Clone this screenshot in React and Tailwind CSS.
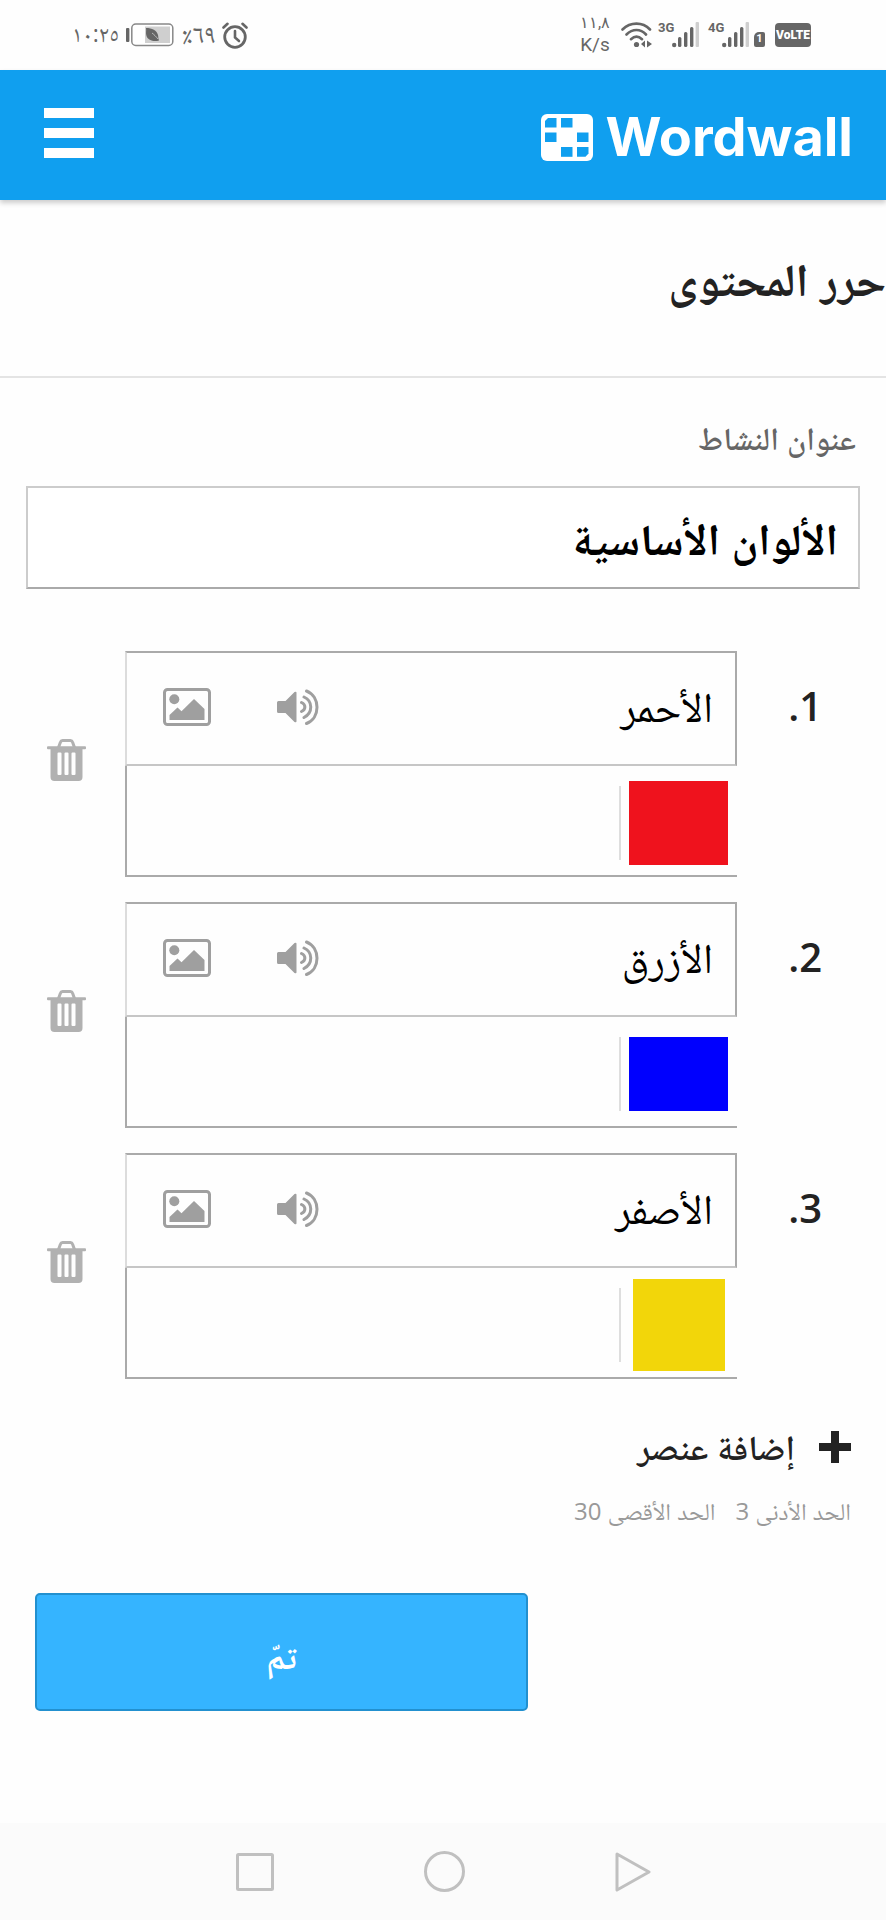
import React from "react";

const items = [
  { n: 1, text: "الأحمر", swatch: "h-[84px] w-[99px] bg-[#ef121d]" },
  { n: 2, text: "الأزرق", swatch: "h-[74px] w-[99px] bg-[#0000fe]" },
  { n: 3, text: "الأصفر", swatch: "h-[92px] w-[92px] bg-[#f2d60a]" },
];

function Bars() {
  return (
    <svg width="28" height="26" viewBox="0 0 28 26" aria-hidden="true">
      <circle cx="2.2" cy="23" r="2.2" fill="#666" />
      <rect x="6" y="15" width="3.4" height="10" rx="1.5" fill="#666" />
      <rect x="12" y="10" width="3.4" height="15" rx="1.5" fill="#666" />
      <rect x="18" y="5" width="3.4" height="20" rx="1.5" fill="#666" />
      <rect x="23.6" y="0" width="3.4" height="25" rx="1" fill="#cfcfcf" />
    </svg>
  );
}

function StatusBar() {
  return (
    <div dir="ltr" className="flex h-[70px] items-center justify-between pr-[75px] pl-[72px] text-[#666]">
      <div className="flex items-center">
        <span className="w-[46px] pb-1 text-[23px] leading-7">١٠:٢٥</span>
        <svg className="ml-2" width="48" height="24" viewBox="0 0 48 24" aria-label="البطارية">
          <rect x="0" y="5" width="3.4" height="14" rx="1" fill="#666" />
          <rect x="5.8" y="1" width="41" height="21.5" rx="4" fill="#fff" stroke="#888" strokeWidth="1.5" />
          <rect x="19" y="3.5" width="25" height="16.5" fill="#cfcfcf" />
          <path d="M20 5c6 0 11 2.500 12 7 .5 2 0 3 1 5.500-5 1.500-11 0-12.500-4.500C19.500 10 20.500 8 20 5z" fill="#666" />
          <path d="M26 10c2 1.500 4 3.500 6 6" stroke="#cfcfcf" strokeWidth="0.800" fill="none" />
        </svg>
        <span className="ml-2 w-[34px] pb-1 text-[26px] leading-7">٪٦٩</span>
        <svg className="ml-1.5" width="26" height="27" viewBox="0 0 26 27" fill="none" stroke="#666" aria-label="منبه">
          <circle cx="13" cy="15" r="10.300" strokeWidth="2.800" />
          <path d="M13 9v6.500l4 3.500" strokeWidth="2.600" strokeLinecap="round" />
          <path d="M1.500 5.500l4-3.700M24.500 5.500l-4-3.700" strokeWidth="2.600" strokeLinecap="round" />
        </svg>
      </div>
      <div className="flex items-center">
        <div className="flex w-8 flex-col items-center font-['Roboto','Open_Sans','Noto_Sans',sans-serif]">
          <span className="text-[16px] leading-5">١١,٨</span>
          <span className="text-[19px] leading-6">K/s</span>
        </div>
        <svg className="ml-2.5" width="31" height="26" viewBox="0 0 31 26" fill="none" stroke="#666" strokeWidth="2.600" strokeLinecap="round" aria-label="واي فاي">
          <path d="M1.500 7.500C9.500-.3 21.500-.3 29 7.500M5.500 12.500c6-6 14-6 19.500 0M10 17.200c3.500-3.200 7.500-3.200 11 0" />
          <circle cx="15.500" cy="22.500" r="2.600" fill="#666" stroke="none" />
          <path d="M24 18.500v7l-4-3.500zM26 25.500v-7l5 3.500z" fill="#666" stroke="none" />
        </svg>
        <span className="ml-1.5 w-[14px] pb-3.5 font-['Roboto',sans-serif] text-[13px] leading-3 font-bold">3G</span>
        <Bars />
        <span className="ml-2 w-[14px] pb-3.5 font-['Roboto',sans-serif] text-[13px] leading-3 font-bold">4G</span>
        <Bars />
        <span className="mt-2 ml-1 flex h-[15px] w-[11px] items-center justify-center rounded-[2px] rounded-tl-[5px] bg-[#666] font-['Roboto',sans-serif] text-[11px] leading-3 font-bold text-white">1</span>
        <span className="ml-2.5 flex h-6 w-9 items-center justify-center rounded bg-[#666] font-['Roboto',sans-serif] text-[12px] leading-3 font-black text-white">VoLTE</span>
      </div>
    </div>
  );
}

function LogoMark() {
  return (
    <svg width="52" height="47" viewBox="0 0 52 47" aria-hidden="true">
      <rect width="52" height="47" rx="6" fill="#fff" />
      <g fill="#109fef">
        <path d="M7 4h8.500v9.500H4V7z" />
        <rect x="20" y="4" width="11.500" height="9.500" />
        <rect x="4" y="18.500" width="11.500" height="9.500" />
        <rect x="36" y="18.500" width="11.500" height="9.500" />
        <rect x="20" y="33" width="11.500" height="9.800" />
        <path d="M36 33h11.500v6.500l-3 3.300H36z" />
      </g>
    </svg>
  );
}

function Header() {
  return (
    <header className="flex h-[130px] items-center justify-between bg-[#109fef] pr-[33px] pl-11 shadow-[0_3px_5px_rgba(0,0,0,0.2)]">
      <a href="#home" dir="ltr" className="flex items-center gap-3 pt-1 font-['Inter',sans-serif] text-[54px] leading-[54px] font-bold text-white">
        <LogoMark />
        <span>Wordwall</span>
      </a>
      <button type="button" aria-label="القائمة" className="flex w-[50px] flex-col gap-2.5 pb-1">
        <span className="h-2.5 w-full bg-white" />
        <span className="h-2.5 w-full bg-white" />
        <span className="h-2.5 w-full bg-white" />
      </button>
    </header>
  );
}

function ImageIcon() {
  return (
    <svg width="48" height="38" viewBox="0 0 48 38" aria-hidden="true">
      <rect x="1.500" y="1.500" width="45" height="35" rx="3" fill="none" stroke="#9f9f9f" strokeWidth="3" />
      <circle cx="11.300" cy="11.300" r="5" fill="#9f9f9f" />
      <path d="M6.500 32v-5l8-7.500 4 3.700L31 11l10.500 10v11z" fill="#9f9f9f" />
    </svg>
  );
}

function SoundIcon() {
  return (
    <svg width="42" height="36" viewBox="0 0 42 36" aria-hidden="true">
      <path d="M1.500 12h7L17.500 3q2-1 2 .8v28.400q0 1.800-2 .8L8.500 24h-7Q0 24 0 22.500v-9Q0 12 1.500 12z" fill="#9f9f9f" />
      <path d="M24.500 13.500c4.500 2 4.500 7 0 9M27 8c9 4 9 16 0 20.500M29.500 2c14 5.500 14 27 0 32.500" fill="none" stroke="#9f9f9f" strokeWidth="3" strokeLinecap="round" />
    </svg>
  );
}

function TrashIcon() {
  return (
    <svg width="39" height="42" viewBox="0 0 39 42" aria-hidden="true">
      <path d="M11.500 8.500L13.500 3q.5-1.500 2-1.500h8q1.500 0 2 1.500l2 5.500" fill="none" stroke="#b1b1b1" strokeWidth="3" />
      <rect x="0" y="7.300" width="39" height="3" rx="1" fill="#b1b1b1" />
      <path fillRule="evenodd" d="M3.500 9h32v29q0 4-4 4h-24q-4 0-4-4zM10.500 14.500v20.500q0 1 1 1h2q1 0 1-1V14.500q0-1-1-1h-2q-1 0-1 1zm7 0v20.500q0 1 1 1h2q1 0 1-1V14.500q0-1-1-1h-2q-1 0-1 1zm7 0v20.500q0 1 1 1h2q1 0 1-1V14.500q0-1-1-1h-2q-1 0-1 1z" fill="#b1b1b1" />
    </svg>
  );
}

function Item({ n, text, swatch }) {
  return (
    <li className="flex">
      <label htmlFor={"item-" + n} className="w-[149px] shrink-0 pt-7 pr-16 text-[40px] leading-[54px] font-semibold text-[#222]">
        {n}.
      </label>
      <div className="min-w-0 flex-1">
        <div className="flex h-[115px] items-center border-2 border-t-[#aaa] border-r-[#aaa] border-b-[#c6c6c6] border-l-[#dcdcdc] pr-[22px] pb-1 pl-9">
          <input id={"item-" + n} defaultValue={text} className="h-[90px] min-w-0 flex-1 bg-transparent pt-3 text-[42px] text-black outline-none" />
          <button type="button" aria-label="إضافة صوت" className="shrink-0">
            <SoundIcon />
          </button>
          <button type="button" aria-label="إضافة صورة" className="mr-[66px] shrink-0">
            <ImageIcon />
          </button>
        </div>
        <div className="flex h-[111px] items-center gap-[7px] border-b-2 border-l-2 border-[#aaa] pt-1 pr-2">
          <div className="flex w-[101px] shrink-0 justify-center">
            <div role="img" aria-label={text} className={swatch} />
          </div>
          <div className="h-[74px] w-0.5 shrink-0 bg-[#dedede]" />
          <input aria-label={"إجابة " + n} className="h-[74px] min-w-0 flex-1 bg-transparent text-[42px] outline-none" />
        </div>
      </div>
      <div className="flex w-[125px] shrink-0 items-center justify-end pb-2 pl-[47px]">
        <button type="button" aria-label={"حذف " + n}>
          <TrashIcon />
        </button>
      </div>
    </li>
  );
}

export default function App() {
  return (
    <div dir="rtl" className="flex min-h-screen flex-col bg-[#fefefe] font-['Open_Sans','Noto_Sans','Noto_Naskh_Arabic','Noto_Sans_Arabic','DejaVu_Sans',sans-serif]">
      <StatusBar />
      <Header />
      <main className="flex-1">
        <div className="flex h-[178px] items-center border-b-2 border-[#e4e4e4] pb-5">
          <h1 className="text-[46px] leading-[60px] font-bold text-[#222]">حرر المحتوى</h1>
        </div>
        <form className="pt-8" onSubmit={(e) => e.preventDefault()}>
          <div className="flex flex-col gap-5 px-[26px]">
            <label htmlFor="title" className="pr-1 text-[32px] leading-[56px] font-semibold text-[#666]">عنوان النشاط</label>
            <input id="title" defaultValue="الألوان الأساسية" className="h-[103px] w-full border-2 border-[#ccc] border-b-[#aaa] bg-white px-5 pt-4 text-[44px] font-bold text-black outline-none" />
          </div>
          <ol className="mt-[62px] flex flex-col gap-[25px]">
            {items.map((it) => (
              <Item key={it.n} {...it} />
            ))}
          </ol>
          <div className="mt-10 flex flex-col items-start pr-[35px]">
            <button type="button" className="flex items-center gap-6 text-[35px] leading-[56px] font-semibold text-[#222]">
              <svg width="32" height="32" viewBox="0 0 32 32" aria-hidden="true">
                <path d="M12 0h8v12h12v8H20v12h-8V20H0v-8h12z" fill="#222" />
              </svg>
              إضافة عنصر
            </button>
            <p className="mt-4 flex gap-5 text-[24px] leading-10 text-[#999]">
              <span>الحد الأدنى 3</span>
              <span>الحد الأقصى 30</span>
            </p>
          </div>
          <div className="mt-[62px] mb-24 flex justify-end pl-[35px]">
            <button type="submit" className="h-[118px] w-[58%] max-w-[493px] rounded-[5px] border-2 border-[#2290cf] bg-[#35b4ff] pt-2 text-[34px] font-bold text-white">
              تمّ
            </button>
          </div>
        </form>
      </main>
      <nav dir="ltr" className="flex h-[97px] items-center justify-center gap-[150px] bg-[#fbfbfb]">
        <button type="button" aria-label="التطبيقات الأخيرة">
          <svg width="38" height="38" viewBox="0 0 38 38" fill="none" stroke="#c0c0c0" strokeWidth="3">
            <rect x="1.500" y="1.500" width="35" height="35" rx="1" />
          </svg>
        </button>
        <button type="button" aria-label="الرئيسية">
          <svg width="41" height="41" viewBox="0 0 41 41" fill="none" stroke="#c0c0c0" strokeWidth="3">
            <circle cx="20.500" cy="20.500" r="19" />
          </svg>
        </button>
        <button type="button" aria-label="رجوع">
          <svg width="36" height="40" viewBox="0 0 36 40" fill="none" stroke="#c0c0c0" strokeWidth="3" strokeLinejoin="round">
            <path d="M2 2l32 18L2 38z" />
          </svg>
        </button>
      </nav>
    </div>
  );
}
